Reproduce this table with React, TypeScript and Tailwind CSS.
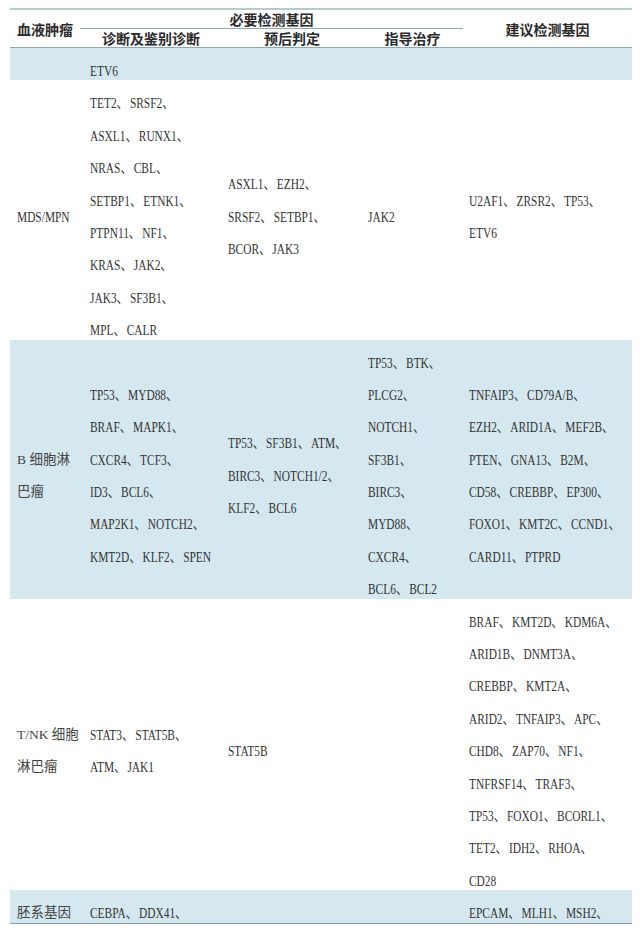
import React from "react";

const FONT = "font-[family-name:'Liberation_Serif','Noto_Sans_CJK_SC',serif]";

function G({ t }: { t: string }) {
  const parts = t.split("、");
  return (
    <div className="h-[32.4px] pt-[16px] leading-[14px] whitespace-nowrap">
      <span className="inline-block origin-left scale-x-[0.76] text-[15px]">
        {parts.map((p, i) => (
          <React.Fragment key={i}>
            {p}
            {i < parts.length - 1 && <span className="tracking-[2.5px]">、</span>}
          </React.Fragment>
        ))}
      </span>
    </div>
  );
}

function C({ t }: { t: string }) {
  return (
    <div className="h-[32.4px] pt-[16px] leading-[14px] whitespace-nowrap text-[13.5px] text-[#444444]">{t}</div>
  );
}

type Row = {
  blue: boolean;
  c1: { t: string; cjk?: boolean }[];
  c2: string[];
  c3: string[];
  c4: string[];
  c5: string[];
};

const rows: Row[] = [
  { blue: true, c1: [], c2: ["ETV6"], c3: [], c4: [], c5: [] },
  {
    blue: false,
    c1: [{ t: "MDS/MPN" }],
    c2: [
      "TET2、SRSF2、",
      "ASXL1、RUNX1、",
      "NRAS、CBL、",
      "SETBP1、ETNK1、",
      "PTPN11、NF1、",
      "KRAS、JAK2、",
      "JAK3、SF3B1、",
      "MPL、CALR",
    ],
    c3: ["ASXL1、EZH2、", "SRSF2、SETBP1、", "BCOR、JAK3"],
    c4: ["JAK2"],
    c5: ["U2AF1、ZRSR2、TP53、", "ETV6"],
  },
  {
    blue: true,
    c1: [
      { t: "B 细胞淋", cjk: true },
      { t: "巴瘤", cjk: true },
    ],
    c2: [
      "TP53、MYD88、",
      "BRAF、MAPK1、",
      "CXCR4、TCF3、",
      "ID3、BCL6、",
      "MAP2K1、NOTCH2、",
      "KMT2D、KLF2、SPEN",
    ],
    c3: ["TP53、SF3B1、ATM、", "BIRC3、NOTCH1/2、", "KLF2、BCL6"],
    c4: [
      "TP53、BTK、",
      "PLCG2、",
      "NOTCH1、",
      "SF3B1、",
      "BIRC3、",
      "MYD88、",
      "CXCR4、",
      "BCL6、BCL2",
    ],
    c5: [
      "TNFAIP3、CD79A/B、",
      "EZH2、ARID1A、MEF2B、",
      "PTEN、GNA13、B2M、",
      "CD58、CREBBP、EP300、",
      "FOXO1、KMT2C、CCND1、",
      "CARD11、PTPRD",
    ],
  },
  {
    blue: false,
    c1: [
      { t: "T/NK 细胞", cjk: true },
      { t: "淋巴瘤", cjk: true },
    ],
    c2: ["STAT3、STAT5B、", "ATM、JAK1"],
    c3: ["STAT5B"],
    c4: [],
    c5: [
      "BRAF、KMT2D、KDM6A、",
      "ARID1B、DNMT3A、",
      "CREBBP、KMT2A、",
      "ARID2、TNFAIP3、APC、",
      "CHD8、ZAP70、NF1、",
      "TNFRSF14、TRAF3、",
      "TP53、FOXO1、BCORL1、",
      "TET2、IDH2、RHOA、",
      "CD28",
    ],
  },
  {
    blue: true,
    c1: [{ t: "胚系基因", cjk: true }],
    c2: ["CEBPA、DDX41、"],
    c3: [],
    c4: [],
    c5: ["EPCAM、MLH1、MSH2、"],
  },
];

function Cell({ lines, pad }: { lines: string[]; pad: string }) {
  return (
    <div className={`flex flex-col justify-center ${pad}`}>
      {lines.map((l, i) => (
        <G key={i} t={l} />
      ))}
    </div>
  );
}

export default function App() {
  return (
    <div className={`w-[640px] h-[928px] bg-white overflow-hidden ${FONT} text-[#333333]`}>
      <div className="mt-[8px] ml-[10px] w-[622px] border-t-2 border-[#b3cacf]">
        {/* header */}
        <div className="grid grid-cols-[70px_383px_169px] h-[38px] border-b border-[#8eabb2] text-[14px] font-semibold text-[#2a2a2a] font-[family-name:'Noto_Sans_CJK_SC',sans-serif] leading-none">
          <div className="flex items-center justify-center">血液肿瘤</div>
          <div className="flex flex-col">
            <div className="h-[19px] border-b border-[#8eabb2] flex items-center justify-center">必要检测基因</div>
            <div className="flex-1 grid grid-cols-[142px_140px_101px]">
              <div className="flex items-center justify-center">诊断及鉴别诊断</div>
              <div className="flex items-center justify-center">预后判定</div>
              <div className="flex items-center justify-center">指导治疗</div>
            </div>
          </div>
          <div className="flex items-center justify-center">建议检测基因</div>
        </div>
        {/* body */}
        <div className="border-b border-[#7e9fa8]">
          {rows.map((r, i) => (
            <div
              key={i}
              className={`grid grid-cols-[70px_142px_140px_101px_169px] ${r.blue ? "bg-[#d5e8ef]" : "bg-white"}`}
            >
              <div className="flex flex-col justify-center pl-[7px]">
                {r.c1.map((x, j) => (x.cjk ? <C key={j} t={x.t} /> : <G key={j} t={x.t} />))}
              </div>
              <Cell lines={r.c2} pad="pl-[10px]" />
              <Cell lines={r.c3} pad="pl-[6px]" />
              <Cell lines={r.c4} pad="pl-[6px]" />
              <Cell lines={r.c5} pad="pl-[6px]" />
            </div>
          ))}
        </div>
      </div>
    </div>
  );
}
